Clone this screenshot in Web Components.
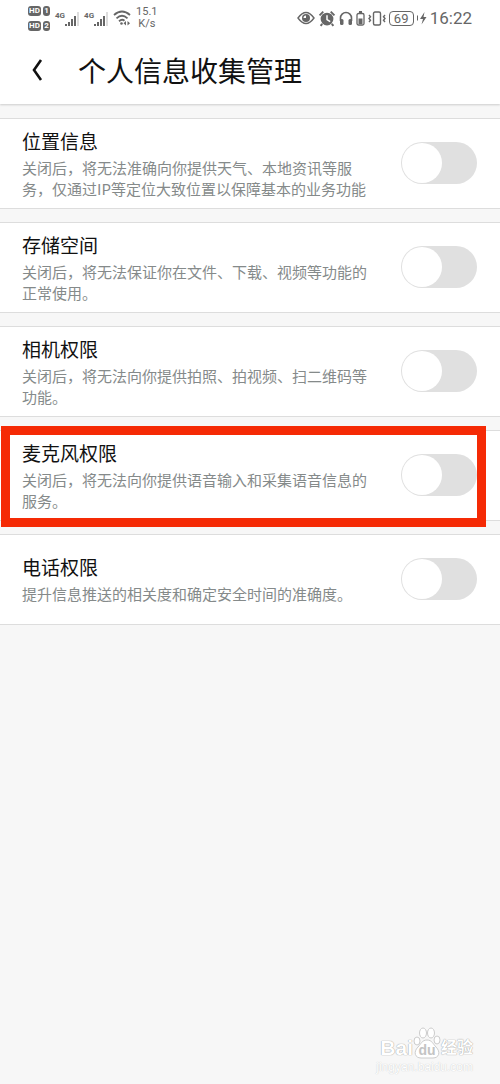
<!DOCTYPE html>
<html lang="zh-CN">
<head>
<meta charset="utf-8">
<meta name="viewport" content="width=device-width, initial-scale=1">
<title>个人信息收集管理</title>
<style>
html, body { margin: 0; min-height: 100%; }
body { background: #f7f7f7; font-family: "Noto Sans CJK SC", sans-serif; color: #111; }
</style>
</head>
<body>
<permission-page>
  <status-bar slot="top"></status-bar>
  <page-header slot="top">个人信息收集管理</page-header>
  <permission-card heading="位置信息">关闭后，将无法准确向你提供天气、本地资讯等服务，仅通过IP等定位大致位置以保障基本的业务功能</permission-card>
  <permission-card heading="存储空间">关闭后，将无法保证你在文件、下载、视频等功能的正常使用。</permission-card>
  <permission-card heading="相机权限">关闭后，将无法向你提供拍照、拍视频、扫二维码等功能。</permission-card>
  <permission-card heading="麦克风权限" highlighted>关闭后，将无法向你提供语音输入和采集语音信息的服务。</permission-card>
  <permission-card heading="电话权限">提升信息推送的相关度和确定安全时间的准确度。</permission-card>
  <water-mark slot="mark"></water-mark>
</permission-page>

<template id="permission-page">
  <style>
    :host { display: block; position: relative; min-height: 100vh; }
    header { background: #fff; box-shadow: 0 1px 2px #ccc; }
    main { display: flex; flex-direction: column; gap: 13px; padding: 14px 0; }
  </style>
  <header><slot name="top"></slot></header>
  <main><slot></slot></main>
  <slot name="mark"></slot>
</template>

<template id="status-bar">
  <style>
    :host { display: flex; justify-content: space-between; align-items: center; height: 36px; padding: 0 28px; color: #666; font-family: Roboto, sans-serif; }
    div { display: flex; align-items: center; }
    svg { display: block; flex: none; }
    .left { gap: 5px; }
    .right { gap: 3px; }
    .hd { flex-direction: column; gap: 5px; }
    .hd div { gap: 2px; }
    .hd span { background: #666; color: #fff; border-radius: 3px; font-size: 8px; line-height: 10px; font-weight: 700; width: 13px; text-align: center; }
    .hd span + span { width: 7px; }
    .cell { align-items: flex-start; }
    .cell b { font-size: 8px; line-height: 10px; font-family: Roboto, sans-serif; }
    .cell svg { margin-top: 1px; }
    .rate { font-size: 11px; line-height: 12px; text-align: center; }
    .battery { width: 23px; height: 13px; border: 1px solid #666; border-radius: 4px; justify-content: center; font-size: 13px; line-height: 13px; }
    time { font-size: 17px; line-height: 20px; }
  </style>
  <div class="left">
    <div class="hd"><div><span>HD</span><span>1</span></div><div><span>HD</span><span>2</span></div></div>
    <div class="cell"><b>4G</b><svg width="14" height="14"><path d="M1 14v-2M4 14v-4M7 14V7M10 14V4" stroke="#666" stroke-width="2"/><path d="M13 14V0" stroke="#ddd" stroke-width="2"/></svg></div>
    <div class="cell"><b>4G</b><svg width="14" height="14"><path d="M1 14v-2M4 14v-4M7 14V7M10 14V4" stroke="#666" stroke-width="2"/><path d="M13 14V0" stroke="#ddd" stroke-width="2"/></svg></div>
    <svg width="18" height="16" viewBox="0 0 18 16" fill="none" stroke="#666" stroke-width="1.800"><path d="M1 5q8-7 16 0M3.500 8.300q5.500-5 11 0M6 11.200q3-2.600 5.500-.5"/><circle cx="8.500" cy="13.500" r="1.300" fill="#666" stroke="none"/><path d="m13 11-2.500 2.200L13 15.500zm1.500 0 2.500 2.200-2.500 2.300z" fill="#666" stroke="none"/></svg>
    <div class="rate">15.1<br>K/s</div>
  </div>
  <div class="right">
    <svg width="18" height="14" viewBox="0 0 18 14"><path d="M1 7q8-11 16 0-8 11-16 0z" fill="none" stroke="#666" stroke-width="1.400"/><circle cx="9" cy="7" r="4" fill="#666"/><path d="M9 7V4.500A2.500 2.500 0 0 0 6.500 7z" fill="#fff"/></svg>
    <svg width="18" height="17" viewBox="0 0 16 16"><circle cx="8" cy="8.500" r="6" fill="#666"/><path d="m1 5 3.500-3.500M15 5l-3.500-3.500M3.500 13 2 15M12.500 13l1.500 2" stroke="#666" stroke-width="1.800"/><path d="M8 5v4l3 2" fill="none" stroke="#fff" stroke-width="1.400"/></svg>
    <svg width="14" height="15" viewBox="0 0 14 15"><path d="M1.500 10V7a5.500 5.500 0 0 1 11 0v3" fill="none" stroke="#666" stroke-width="1.600"/><rect x="1" y="8" width="3.500" height="6" rx="1.500" fill="#666"/><rect x="9.500" y="8" width="3.500" height="6" rx="1.500" fill="#666"/></svg>
    <svg width="9" height="15" viewBox="0 0 9 15"><path d="M3 1h3" stroke="#666" stroke-width="2"/><rect x="1" y="2.500" width="7" height="11.500" rx="1.500" fill="none" stroke="#666" stroke-width="1.300"/><path d="M2.500 7.500h4V13h-4z" fill="#666"/></svg>
    <svg width="18" height="15" viewBox="0 0 18 15" fill="none" stroke="#666" stroke-width="1.400"><rect x="5.500" y="1" width="7" height="13" rx="1.500"/><path d="m1 4 1.500 1.700L1 7.500l1.500 1.700L1 11M17 4l-1.500 1.700L17 7.500l-1.500 1.700L17 11"/></svg>
    <div class="battery">69</div>
    <svg width="10" height="14" viewBox="0 0 10 14"><path d="M0 4.500v5" stroke="#666" stroke-width="2"/><path d="M7.500 1 3 8h3l-1.500 5.500L9.500 6h-3z" fill="#666"/></svg>
    <time>16:22</time>
  </div>
</template>

<template id="page-header">
  <style>
    :host { display: flex; align-items: center; gap: 30px; height: 68px; padding: 0 24px; }
    button { border: 0; background: none; padding: 0; width: 24px; height: 40px; color: inherit; }
    svg { display: block; margin-left: 6px; }
    h1 { margin: 0; font-size: 28px; line-height: 40px; font-weight: 400; }
  </style>
  <button type="button" aria-label="返回"><svg width="14" height="24" viewBox="0 0 14 24" fill="none" stroke="#111" stroke-width="2.600"><path d="M11 2 4 12l7 10"/></svg></button>
  <h1><slot></slot></h1>
</template>

<template id="permission-card">
  <style>
    :host { display: flex; align-items: center; gap: 27px; position: relative; box-sizing: border-box; min-height: 91px; padding: 2px 23px 4px 22px; background: #fff; border-top: 1px solid #ddd; border-bottom: 1px solid #ddd; }
    :host([highlighted])::after { content: ""; position: absolute; inset: -5px 14px -7px 1px; border: 9px solid #f52a05; pointer-events: none; }
    .text { flex: 1; min-width: 0; }
    label { display: block; margin-bottom: 2px; font-size: 19px; line-height: 28px; color: #111; }
    p { margin: 0; font-size: 15px; line-height: 21px; color: #858a8a; }
    input { appearance: none; flex: none; margin: 0; width: 76px; height: 42px; border-radius: 21px; background: #e0e0e0; display: flex; padding: 1px; box-sizing: border-box; }
    input::before { content: ""; width: 40px; height: 40px; border-radius: 50%; background: #fff; }
    input:checked { justify-content: flex-end; background: #4e6ef2; }
  </style>
  <div class="text"><label for="toggle"></label><p id="note"><slot></slot></p></div>
  <input type="checkbox" role="switch" id="toggle" aria-describedby="note">
</template>

<template id="water-mark">
  <style>
    :host { position: absolute; right: 27px; bottom: 10px; display: block; font-family: "Liberation Sans", "Noto Sans CJK SC", sans-serif; color: #fff; }
    .brand { display: flex; align-items: center; justify-content: flex-end; height: 24px; font-size: 21px; line-height: 24px; font-weight: 700; text-shadow: 0 0 1px #999, 0 0 1px #bbb; }
    .brand span:last-child { font-size: 16px; }
    svg { display: block; margin-top: -10px; }
    svg text { text-shadow: none; }
    small { display: block; font-size: 12px; line-height: 14px; text-align: right; text-shadow: 0 0 1px #bbb; }
  </style>
  <div class="brand"><span>Bai</span><svg width="28" height="32" viewBox="0 0 28 32" fill="#fff" stroke="#ccc"><path d="M14 13c5 0 6 4 9 7 5 5 3 11-3 11H8c-6 0-8-6-3-11 3-3 4-7 9-7z"/><ellipse cx="4" cy="14" rx="3" ry="4"/><ellipse cx="10" cy="6" rx="3.500" ry="5"/><ellipse cx="18" cy="6" rx="3.500" ry="5"/><ellipse cx="24" cy="13" rx="3" ry="4"/><text x="14" y="28" text-anchor="middle" font-size="14" font-weight="700" fill="#c4c4c4" stroke="none">du</text></svg><span>经验</span></div>
  <small>jingyan.baidu.com</small>
</template>

<script>
class TemplateElement extends HTMLElement {
  constructor() {
    super();
    const template = document.getElementById(this.localName);
    this.attachShadow({ mode: "open" }).append(template.content.cloneNode(true));
  }
}
class PermissionCard extends TemplateElement {
  connectedCallback() {
    this.shadowRoot.querySelector("label").textContent = this.getAttribute("heading");
  }
}
customElements.define("permission-page", class extends TemplateElement {});
customElements.define("status-bar", class extends TemplateElement {});
customElements.define("page-header", class extends TemplateElement {});
customElements.define("permission-card", PermissionCard);
customElements.define("water-mark", class extends TemplateElement {});
</script>
</body>
</html>
